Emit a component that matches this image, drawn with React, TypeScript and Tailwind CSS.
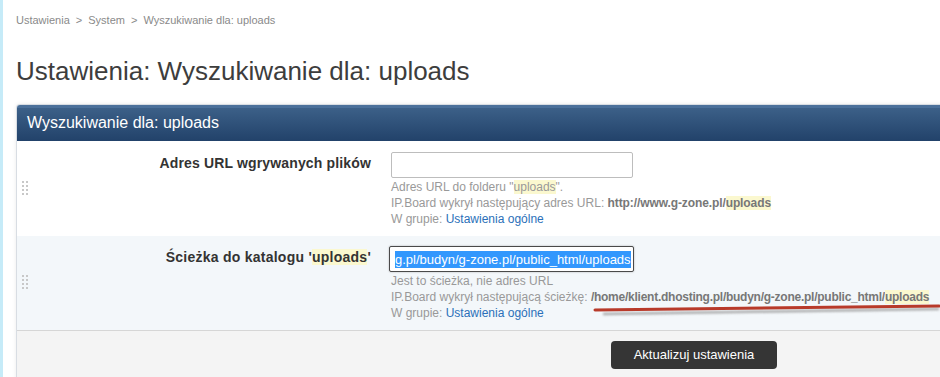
const hl = "bg-[#fbf8cf]";

function DragHandle() {
    return (
        <div className="grid grid-cols-2 gap-x-[2px] gap-y-[2px] w-[6px]">
            {Array.from({ length: 8 }).map((_, i) => (
                <div key={i} className="w-[2px] h-[2px] bg-[#c8c8c8]" />
            ))}
        </div>
    );
}

function Underline() {
    return (
        <svg className="absolute left-[222px] top-[59px] overflow-visible" width="350" height="14" viewBox="0 0 350 14">
            <defs>
                <filter id="blur" x="-5%" y="-200%" width="110%" height="500%">
                    <feGaussianBlur stdDeviation="1.2" />
                </filter>
            </defs>
            <path d="M10 9 C 90 8, 200 7, 346 4" stroke="#9a9a9a" strokeWidth="2.5" fill="none" filter="url(#blur)" opacity="0.8" />
            <path d="M2 5 C 90 4.5, 200 3, 346 1" stroke="#b83a2a" strokeWidth="3" fill="none" strokeLinecap="round" />
        </svg>
    );
}

export default function App() {
    return (
        <div className="w-[940px] h-[377px] overflow-hidden bg-white border-l-[3px] border-[#c6ebf8] font-['Liberation_Sans',Arial,sans-serif] relative">
            <div className="pl-[13px] pt-[13px]">
                {/* Breadcrumb */}
                <div className="text-[11px] text-[#8a8a8a] leading-[14px] flex gap-[6px]">
                    <span>Ustawienia</span>
                    <span>&gt;</span>
                    <span>System</span>
                    <span>&gt;</span>
                    <span>Wyszukiwanie dla: uploads</span>
                </div>

                <h1 className="text-[26px] text-[#3d3d3d] leading-[30px] mt-[29px]">Ustawienia: Wyszukiwanie dla: uploads</h1>

                {/* Panel */}
                <div className="mt-[18px] w-[1000px] border-l border-t border-[#d8dde3] rounded-tl-[4px] shadow-[0_0_4px_rgba(0,0,0,0.08)]">
                    <div className="h-[36px] bg-gradient-to-b from-[#3c6088] to-[#22426a] border-t-[3px] border-[#4b709a] rounded-tl-[3px] px-[10px] flex items-center">
                        <span className="text-white text-[16px] leading-[20px] -mt-[3px]">Wyszukiwanie dla: uploads</span>
                    </div>

                    {/* Row 1 */}
                    <div className="flex bg-white h-[95px] pt-[11px] relative">
                        <div className="absolute left-[5px] top-[40px]"><DragHandle /></div>
                        <div className="w-[354px] text-right font-bold text-[14px] text-[#333] pt-[3px] leading-[16px] tracking-[0.15px]">Adres URL wgrywanych plików</div>
                        <div className="pl-[20px]">
                            <div className="w-[242px] h-[26px] border border-[#bdbdbd] rounded-[2px] bg-white" />
                            <div className="text-[12px] leading-[16px] text-[#999] mt-[1px]">
                                <div>Adres URL do folderu "<span className={hl}>uploads</span>".</div>
                                <div>IP.Board wykrył następujący adres URL: <b className="text-[#777] tracking-[-0.1px]">http://www.g-zone.pl/<span className={hl}>uploads</span></b></div>
                                <div>W grupie: <span className="text-[#2b70b9]">Ustawienia ogólne</span></div>
                            </div>
                        </div>
                    </div>

                    {/* Row 2 */}
                    <div className="flex bg-[#f3f7fa] h-[94px] pt-[10px] relative">
                        <div className="absolute left-[5px] top-[39px]"><DragHandle /></div>
                        <div className="w-[354px] text-right font-bold text-[14px] text-[#333] pt-[3px] leading-[16px] tracking-[0.25px]">
                            Ścieżka do katalogu '<span className={hl}>uploads</span>'
                        </div>
                        <div className="pl-[18px] relative">
                            <div className="w-[245px] h-[26px] border border-[#4a4a4a] rounded-[2px] bg-white shadow-[0_0_2px_rgba(0,0,0,0.3)] flex items-center pl-[5px] overflow-hidden">
                                <span className="bg-[#3297fd] text-white text-[13px] leading-[17px] whitespace-nowrap">g.pl/budyn/g-zone.pl/public_html/uploads</span>
                            </div>
                            <div className="text-[12px] leading-[16px] text-[#999] mt-[1px] pl-[2px] whitespace-nowrap">
                                <div>Jest to ścieżka, nie adres URL</div>
                                <div>IP.Board wykrył następującą ścieżkę: <b className="text-[#777] tracking-[-0.25px]">/home/klient.dhosting.pl/budyn/g-zone.pl/public_html/<span className={hl}>uploads</span></b></div>
                                <div>W grupie: <span className="text-[#2b70b9]">Ustawienia ogólne</span></div>
                            </div>
                            <Underline />
                        </div>
                    </div>

                    {/* Footer */}
                    <div className="bg-[#f4f4f4] border-t border-[#d6d6d6] h-[60px] pt-[10px] pl-[594px]">
                        <button className="w-[166px] h-[28px] bg-[#353535] rounded-[4px] text-white text-[13px] leading-[16px]">Aktualizuj ustawienia</button>
                    </div>
                </div>
            </div>
        </div>
    );
}
